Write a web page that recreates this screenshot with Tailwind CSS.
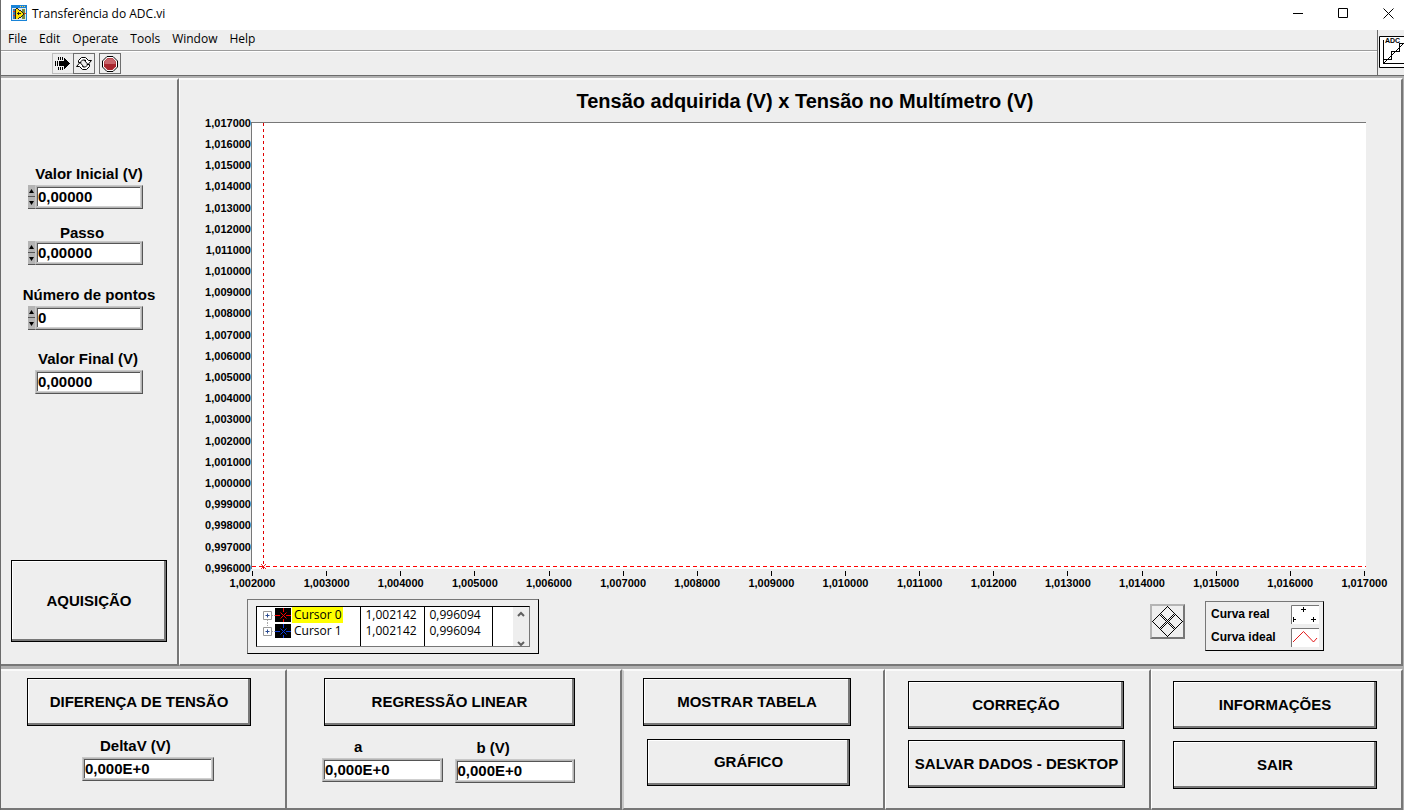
<!DOCTYPE html>
<html lang="pt-BR">
<head>
<meta charset="utf-8">
<title>Transferência do ADC.vi</title>
<script src="https://cdn.jsdelivr.net/npm/@tailwindcss/browser@4"></script>
</head>
<body class="min-h-screen flex flex-col bg-[#b0b0b0] border-l border-[#6b6b6b] text-black font-['Liberation_Sans',Arial,sans-serif] text-[15px] overflow-x-hidden">

<header class="bg-white h-[30px] shrink-0 flex items-center pl-[10px] font-['Open_Sans','Segoe_UI',sans-serif] text-[12px]">
  <svg class="w-4 h-4 mr-[5px] -mt-1" viewBox="0 0 16 16" shape-rendering="crispEdges">
    <rect width="16" height="16" fill="#1883d7"/><rect x="1" y="3" width="14" height="12" fill="#dfe8ee"/>
    <path d="M9 1h1v1H9zM11 1h1v1h-1zM13 1h1v1h-1z" fill="#ffd24a"/>
    <path d="M2 4h2v10H2z" fill="#3b78b0"/>
    <path d="M2 6h3v1H2zM2 10h3v1H2z" fill="#d33a1a"/>
    <path d="M11 4h3v10h-3z" fill="#7a8a3a"/><path d="M12 8h3v1h-3z" fill="#d33a1a"/>
    <path d="M5 4h2v1h1v1h2v1h1v1h1v2h-1v1h-1v1H8v1H7v1H5z" fill="#ffe000"/>
    <path d="M4 4h1v10H4zM5 3h2v1H5zM7 4h1v1H7zM8 5h2v1H8zM10 6h1v1h-1zM11 7h1v1h-1zM12 8h1v2h-1zM11 10h1v1h-1zM10 11h1v1h-1zM8 12h2v1H8zM7 13h1v1H7zM6 8h4v1H6zM7 7h1v3H7z" fill="#222"/>
  </svg>
  <h1 class="flex-1 -mt-[3px]">Transferência do ADC.vi</h1>
  <div class="flex items-center -mt-1 pr-1">
    <button aria-label="Minimizar" class="w-[45px] h-6 grid place-items-center"><svg class="w-[11px] h-[11px]" viewBox="0 0 11 11"><path d="M0 5.5h10" stroke="#000"/></svg></button>
    <button aria-label="Maximizar" class="w-[45px] h-6 grid place-items-center"><svg class="w-[11px] h-[11px]" viewBox="0 0 11 11"><path d="M.5.5h9v9h-9z" fill="none" stroke="#000"/></svg></button>
    <button aria-label="Fechar" class="w-[24px] ml-[10px] h-6 grid place-items-center"><svg class="w-[11px] h-[11px]" viewBox="0 0 11 11"><path d="M.5.5l10 10M10.5.5l-10 10" stroke="#000"/></svg></button>
  </div>
</header>

<div class="flex shrink-0 bg-[#eeeeee] border-b border-[#6b6b6b]">
  <div class="flex-1 min-w-0">
    <nav class="h-[22px] flex items-center gap-3 pl-[7px] pb-[3px] border-b border-white shadow-[inset_0_-1px_0_#9c9c9c] font-['Open_Sans','Segoe_UI',sans-serif] text-[12px]">
      <a href="#">File</a><a href="#">Edit</a><a href="#">Operate</a><a href="#">Tools</a><a href="#">Window</a><a href="#">Help</a>
    </nav>
    <div class="h-[23px] flex items-start pl-[51px] pt-px">
      <button aria-label="Executar" class="w-[21px] h-[21px] border border-r-0 border-[#bdbdbd] grid place-items-center">
        <svg class="w-4 h-[13px]" viewBox="0 0 16 13" shape-rendering="crispEdges"><path d="M0 4h1v5H0zM2 4h1v5H2zM4 4h5V1h1v1h1v1h1v1h1v1h1v1h1v1h-1v1h-1v1h-1v1h-1v1h-1v1H9V9H4z"/><path d="M3 0h1v3H3zM5 0h1v3H5zM7 0h1v3H7zM3 10h1v3H3zM5 10h1v3H5zM7 10h1v3H7z"/></svg>
      </button>
      <button aria-label="Executar continuamente" class="w-[22px] h-[21px] border border-[#6e6e6e] grid place-items-center">
        <svg class="w-4 h-[13px]" viewBox="0 0 16 13" fill="#fff" stroke="#000"><path d="M2.5 5.500V3.500l3-3h4l3 3h1.500l1.500 0-3.500 4-3.500-4H10L8.500 3h-2L5 4.500v1z"/><path d="M13.500 7.500v2l-3 3h-4l-3-3H.5L4 5.500l3.500 4H6.500l1 .5h2L11 8.500v-1z"/></svg>
      </button>
      <button aria-label="Abortar" class="w-[22px] h-[21px] ml-1 border border-[#6e6e6e] grid place-items-center">
        <svg class="w-4 h-4" viewBox="0 0 16 16"><path d="M5 .5h6L15.500 5v6L11 15.500H5L.5 11V5z" fill="#fff" stroke="#000"/><path d="M5.500 2h5L14 5.500v5L10.500 14h-5L2 10.500v-5z" fill="#a8262e"/><path d="M5.500 2.500h5L13.500 5.500V8h-11V5.500z" fill="#c8646a"/></svg>
      </button>
    </div>
  </div>
  <div class="w-[27px] border-l border-[#6b6b6b] overflow-hidden pt-[6px] pl-px">
    <svg class="w-8 h-8 max-w-none" viewBox="0 0 32 32"><path d="M.5.5h31v31H.5z" fill="#fff" stroke="#000"/><g fill="none" stroke="#000" shape-rendering="crispEdges"><path d="M4.500 4v23.500H32M5 23.500h7.500v-8h8v-8H32"/><path d="M5 27L28 4"/></g><text x="6" y="7" font-family="Liberation Sans" font-size="7" font-weight="bold">ADC</text></svg>
  </div>
</div>

<main class="flex-1 flex mt-[2px] mr-px mb-[3px] text-black">
  <section class="w-[178px] shrink-0 bg-[#eeeeee] border-t-2 border-t-[#fafafa] border-r-2 border-b-2 border-r-[#777] border-b-[#777] flex flex-col pt-[85px] pb-[22px] font-bold">
    <label for="vi" class="text-center leading-[18px] mb-[2px]">Valor Inicial (V)</label>
    <div class="flex ml-[27px] w-[115px]">
      <div class="w-[7px] flex flex-col">
        <button aria-label="Aumentar valor inicial" class="h-3 bg-[#b4b4b4] border-b border-[#555] grid place-items-center"><svg class="w-[5px] h-[4px]" viewBox="0 0 5 4"><path d="M2.500 0L5 4H0z"/></svg></button>
        <button aria-label="Diminuir valor inicial" class="h-3 bg-[#b4b4b4] border-b border-[#555] grid place-items-center"><svg class="w-[5px] h-[4px]" viewBox="0 0 5 4"><path d="M2.500 4L5 0H0z"/></svg></button>
      </div>
      <input id="vi" value="0,00000" class="flex-1 min-w-0 h-6 pl-[2px] pb-[2px] bg-white border border-t-[#c8c8c8] border-l-[#c8c8c8] border-r-[#555] border-b-[#555] shadow-[inset_0_0_0_1px_#b4b4b4,inset_-2px_-2px_0_#cfcfcf,inset_2px_2px_0_#555]">
    </div>
    <label for="pa" class="text-center leading-[18px] mt-[15px] -mb-px pr-[14px]">Passo</label>
    <div class="flex ml-[27px] w-[115px]">
      <div class="w-[7px] flex flex-col">
        <button aria-label="Aumentar passo" class="h-3 bg-[#b4b4b4] border-b border-[#555] grid place-items-center"><svg class="w-[5px] h-[4px]" viewBox="0 0 5 4"><path d="M2.500 0L5 4H0z"/></svg></button>
        <button aria-label="Diminuir passo" class="h-3 bg-[#b4b4b4] border-b border-[#555] grid place-items-center"><svg class="w-[5px] h-[4px]" viewBox="0 0 5 4"><path d="M2.500 4L5 0H0z"/></svg></button>
      </div>
      <input id="pa" value="0,00000" class="flex-1 min-w-0 h-6 pl-[2px] pb-[2px] bg-white border border-t-[#c8c8c8] border-l-[#c8c8c8] border-r-[#555] border-b-[#555] shadow-[inset_0_0_0_1px_#b4b4b4,inset_-2px_-2px_0_#cfcfcf,inset_2px_2px_0_#555]">
    </div>
    <label for="np" class="text-center leading-[18px] mt-[21px] mb-[2px]">Número de pontos</label>
    <div class="flex ml-[27px] w-[115px]">
      <div class="w-[7px] flex flex-col">
        <button aria-label="Aumentar número de pontos" class="h-3 bg-[#b4b4b4] border-b border-[#555] grid place-items-center"><svg class="w-[5px] h-[4px]" viewBox="0 0 5 4"><path d="M2.500 0L5 4H0z"/></svg></button>
        <button aria-label="Diminuir número de pontos" class="h-3 bg-[#b4b4b4] border-b border-[#555] grid place-items-center"><svg class="w-[5px] h-[4px]" viewBox="0 0 5 4"><path d="M2.500 4L5 0H0z"/></svg></button>
      </div>
      <input id="np" value="0" class="flex-1 min-w-0 h-6 pl-[2px] pb-[2px] bg-white border border-t-[#c8c8c8] border-l-[#c8c8c8] border-r-[#555] border-b-[#555] shadow-[inset_0_0_0_1px_#b4b4b4,inset_-2px_-2px_0_#cfcfcf,inset_2px_2px_0_#555]">
    </div>
    <label for="vf" class="text-center leading-[18px] mt-5 mb-[2px] pr-[2px]">Valor Final (V)</label>
    <input id="vf" readonly value="0,00000" class="ml-[34px] w-[108px] h-6 pl-[2px] pb-[2px] bg-white border border-t-[#c8c8c8] border-l-[#c8c8c8] border-r-[#555] border-b-[#555] shadow-[inset_0_0_0_1px_#b4b4b4,inset_-2px_-2px_0_#cfcfcf,inset_2px_2px_0_#555]">
    <button class="mt-auto mx-[10px] h-[82px] border border-black shadow-[inset_-2px_-2px_0_#777,inset_1px_1px_0_#fff]">AQUISIÇÃO</button>
  </section>

  <section class="flex-1 min-w-0 bg-[#eeeeee] border-t-2 border-t-[#fafafa] border-l border-l-white border-r-2 border-b-2 border-r-[#777] border-b-[#777] flex flex-col pb-[10px]">
    <h2 class="mt-[10px] mb-[10px] ml-[72px] mr-[43px] text-center text-[20px] leading-[22px] font-bold">Tensão adquirida (V) x Tensão no Multímetro (V)</h2>
    <div class="flex-1 flex mr-[35px]">
      <div id="yaxis" class="w-[71px] pt-px pb-px flex flex-col justify-between items-end text-[11px] font-bold"></div>
      <div class="flex-1 relative bg-white border-t border-l border-[#777]">
        <div class="absolute left-[11px] top-0 bottom-0 w-px bg-[repeating-linear-gradient(to_bottom,#e00000_0px_3px,transparent_3px_6px)]"></div>
        <div class="absolute left-0 right-0 bottom-[2px] h-px bg-[repeating-linear-gradient(to_right,#ff0000_0px_4px,transparent_4px_7px)]"></div>
        <svg class="absolute left-[9px] bottom-0 w-[5px] h-[5px]" viewBox="0 0 5 5"><path d="M0 0l5 5M5 0L0 5" stroke="#e00000" stroke-width=".8"/></svg>
      </div>
    </div>
    <div id="xaxis" class="h-[30px] pt-[2px] ml-[72px] mr-[36px] flex justify-between text-[11px] font-bold"></div>
    <div class="flex items-start pl-[67px] pr-[77px]">
      <div class="w-[292px] h-[55px] border border-t-[#777] border-l-[#777] border-r-black border-b-black pt-[6px] pl-2">
        <div class="w-[274px] h-[41px] flex bg-white border border-black border-r-[#777] border-b-[#777] font-['Open_Sans','Segoe_UI',sans-serif] text-[12px]">
          <table class="h-[39px] border-collapse leading-4">
            <tbody>
              <tr class="h-4">
                <td class="w-[103px] p-0 border-r border-black"><div class="flex items-center h-4 pl-[6px]"><svg class="w-3 h-4 shrink-0" viewBox="0 0 12 16"><path d="M.5 4.500h8v8h-8z" fill="#fff" stroke="#999"/><path d="M2.500 8.500h4M4.500 6.500v4" stroke="#2a4a90"/><path d="M9 8.500h3M4.500 13v3" stroke="#aaa" stroke-dasharray="1 1"/></svg><svg class="w-4 h-[14px] shrink-0" viewBox="0 0 16 14"><path d="M0 0h16v14H0z"/><path d="M0 7.500h5M11 7.500h5M8.500 0v4M8.500 11v3M5.500 4.500l6 6M11.500 4.500l-6 6" stroke="#ff0000"/></svg><span class="ml-px pl-[2px] pr-px h-4 leading-4 bg-[#ffff00] whitespace-nowrap">Cursor 0</span></div></td>
                <td class="w-16 p-0 pl-[5px] border-r border-black">1,002142</td>
                <td class="w-[68px] p-0 pl-[5px] border-r border-black">0,996094</td>
              </tr>
              <tr class="h-4">
                <td class="p-0 border-r border-black"><div class="flex items-center h-4 pl-[6px]"><svg class="w-3 h-4 shrink-0" viewBox="0 0 12 16"><path d="M4.500 0v4M9 8.500h3" stroke="#aaa" stroke-dasharray="1 1"/><path d="M.5 4.500h8v8h-8z" fill="#fff" stroke="#999"/><path d="M2.500 8.500h4M4.500 6.500v4" stroke="#2a4a90"/></svg><svg class="w-4 h-[14px] shrink-0" viewBox="0 0 16 14"><path d="M0 0h16v14H0z"/><path d="M0 7.500h5M11 7.500h5M8.500 0v4M8.500 11v3M5.500 4.500l6 6M11.500 4.500l-6 6" stroke="#1040e0"/></svg><span class="ml-px pl-[2px] pr-px h-4 leading-4 whitespace-nowrap">Cursor 1</span></div></td>
                <td class="p-0 pl-[5px] border-r border-black">1,002142</td>
                <td class="p-0 pl-[5px] border-r border-black">0,996094</td>
              </tr>
              <tr class="h-[7px]"><td class="p-0 border-r border-black"></td><td class="p-0 border-r border-black"></td><td class="p-0 border-r border-black"></td></tr>
            </tbody>
          </table>
          <div class="ml-auto w-4 bg-[#eeeeee] flex flex-col justify-between items-center pt-[4px]">
            <svg class="w-2 h-[6px]" viewBox="0 0 8 6"><path d="M1 5l3-3 3 3" fill="none" stroke="#606060" stroke-width="2"/></svg>
            <svg class="w-2 h-[6px]" viewBox="0 0 8 6"><path d="M1 2l3 3 3-3" fill="none" stroke="#606060" stroke-width="2"/></svg>
          </div>
        </div>
      </div>
      <button aria-label="Mover gráfico" class="ml-auto mt-[5px] w-[35px] h-[35px] border-2 border-t-[#b4b4b4] border-l-[#b4b4b4] border-r-[#777] border-b-[#777] grid place-items-center">
        <svg class="w-[31px] h-[31px]" viewBox="0 0 31 31" fill="none" stroke="#000" shape-rendering="crispEdges"><path d="M15.500 .5l7 7-7 7-7-7zM15.500 16.500l7 7-7 7-7-7zM7.500 8.500l7 7-7 7-7-7zM23.500 8.500l7 7-7 7-7-7z"/></svg>
      </button>
      <div class="ml-5 mt-[2px] w-[119px] h-[50px] border border-t-[#777] border-l-[#777] border-r-black border-b-black pt-[3px] pl-[5px] pr-1 flex flex-col gap-1 text-[12px] font-bold">
        <div class="flex justify-between h-[19px]"><span class="leading-[18px]">Curva real</span><svg class="w-7 h-[19px]" viewBox="0 0 28 19"><path d="M0 0h28v19H0z" fill="#fff"/><path d="M.5 19V.5H28" stroke="#777" fill="none"/><path d="M10 4.500h5M12.500 2v5M20 14.500h5M22.500 12v5M2 14.500h3M2.500 12v5" stroke="#000"/></svg></div>
        <div class="flex justify-between h-[19px]"><span class="leading-[18px]">Curva ideal</span><svg class="w-7 h-[19px]" viewBox="0 0 28 19"><path d="M0 0h28v19H0z" fill="#fff"/><path d="M.5 19V.5H28" stroke="#777" fill="none"/><path d="M2 14L12.500 3.500l10 10.500L26 10" stroke="#e00000" fill="none" stroke-width=".9"/></svg></div>
      </div>
    </div>
  </section>
</main>

<footer class="shrink-0 mr-px grid grid-cols-[286fr_335fr_263fr_266fr_252fr] font-bold">
  <section class="bg-[#eeeeee] border-t-2 border-t-[#fafafa] border-r-2 border-b-2 border-r-[#777] border-b-[#777] h-[141px] pt-[7px] pl-[26px] pr-[34px] flex flex-col">
    <button class="h-12 border border-black shadow-[inset_-2px_-2px_0_#777,inset_1px_1px_0_#fff]">DIFERENÇA DE TENSÃO</button>
    <label for="dv" class="mt-[11px] mb-[2px] leading-[18px] pl-[73px]">DeltaV (V)</label>
    <input id="dv" readonly value="0,000E+0" class="ml-[55px] w-[132px] h-6 pl-[2px] pb-[2px] bg-white border border-t-[#c8c8c8] border-l-[#c8c8c8] border-r-[#555] border-b-[#555] shadow-[inset_0_0_0_1px_#b4b4b4,inset_-2px_-2px_0_#cfcfcf,inset_2px_2px_0_#555]">
  </section>
  <section class="bg-[#eeeeee] border-t-2 border-t-[#fafafa] border-r-2 border-b-2 border-r-[#777] border-b-[#777] h-[141px] pt-[7px] pl-[35px] pr-[45px] flex flex-col">
    <button class="ml-[2px] h-12 border border-black shadow-[inset_-2px_-2px_0_#777,inset_1px_1px_0_#fff]">REGRESSÃO LINEAR</button>
    <div class="flex gap-3">
      <div class="flex-1 min-w-0 flex flex-col mt-3">
        <label for="ca" class="leading-[18px] mb-[2px] pl-8">a</label>
        <input id="ca" readonly value="0,000E+0" class="w-full h-6 pl-[2px] pb-[2px] bg-white border border-t-[#c8c8c8] border-l-[#c8c8c8] border-r-[#555] border-b-[#555] shadow-[inset_0_0_0_1px_#b4b4b4,inset_-2px_-2px_0_#cfcfcf,inset_2px_2px_0_#555]">
      </div>
      <div class="flex-1 min-w-0 flex flex-col mt-[13px]">
        <label for="cb" class="leading-[18px] mb-[2px] pl-[22px]">b (V)</label>
        <input id="cb" readonly value="0,000E+0" class="w-full h-6 pl-[2px] pb-[2px] bg-white border border-t-[#c8c8c8] border-l-[#c8c8c8] border-r-[#555] border-b-[#555] shadow-[inset_0_0_0_1px_#b4b4b4,inset_-2px_-2px_0_#cfcfcf,inset_2px_2px_0_#555]">
      </div>
    </div>
  </section>
  <section class="bg-[#eeeeee] border-t-2 border-t-[#fafafa] border-l-2 border-l-[#c8c8c8] border-r-2 border-b-2 border-r-[#777] border-b-[#777] h-[141px] pt-[7px] pl-[19px] pr-8 flex flex-col">
    <button class="h-12 border border-black shadow-[inset_-2px_-2px_0_#777,inset_1px_1px_0_#fff]">MOSTRAR TABELA</button>
    <button class="mt-[13px] ml-1 mr-px h-[47px] border border-black shadow-[inset_-2px_-2px_0_#777,inset_1px_1px_0_#fff]">GRÁFICO</button>
  </section>
  <section class="bg-[#eeeeee] border-t-2 border-t-[#fafafa] border-l border-l-white border-r-2 border-b-2 border-r-[#777] border-b-[#777] h-[141px] pt-[10px] pl-[22px] pr-6 flex flex-col">
    <button class="mr-px h-12 border border-black shadow-[inset_-2px_-2px_0_#777,inset_1px_1px_0_#fff]">CORREÇÃO</button>
    <button class="mt-[11px] h-12 border border-black whitespace-nowrap shadow-[inset_-2px_-2px_0_#777,inset_1px_1px_0_#fff]">SALVAR DADOS - DESKTOP</button>
  </section>
  <section class="bg-[#eeeeee] border-t-2 border-t-[#fafafa] border-l border-l-white border-r-2 border-b-2 border-r-[#777] border-b-[#777] h-[141px] pt-[10px] pl-[21px] pr-6 flex flex-col">
    <button class="h-12 border border-black shadow-[inset_-2px_-2px_0_#777,inset_1px_1px_0_#fff]">INFORMAÇÕES</button>
    <button class="mt-3 h-12 border border-black shadow-[inset_-2px_-2px_0_#777,inset_1px_1px_0_#fff]">SAIR</button>
  </section>
</footer>

<script>
  const fmt = n => (n / 1000).toFixed(6).replace('.', ',');
  const y = document.getElementById('yaxis'), x = document.getElementById('xaxis');
  for (let n = 1017; n >= 996; n--) y.insertAdjacentHTML('beforeend', `<span class="h-0 flex items-center">${fmt(n)}</span>`);
  for (let n = 1002; n <= 1017; n++) x.insertAdjacentHTML('beforeend', `<div class="w-px flex flex-col items-center"><i class="w-px h-[5px] bg-black"></i><span class="leading-[14px]">${fmt(n)}</span></div>`);
</script>
</body>
</html>
